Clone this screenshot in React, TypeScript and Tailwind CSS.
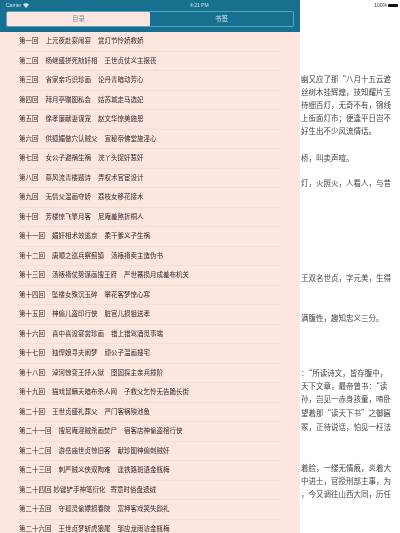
const chapters: { no: string; a: string; b: string; tight?: boolean }[] = [
  { no: "第一回", a: "上元夜赴宴闹宴", b: "赏灯节怜娇救娇" },
  { no: "第二回", a: "杨继盛拼死劾奸相", b: "王世贞仗义主报丧" },
  { no: "第三回", a: "省家亲巧识珍画", b: "论丹青暗动芳心" },
  { no: "第四回", a: "拜月亭赠图私会", b: "姑苏城走马选妃" },
  { no: "第五回", a: "徐孝廉献妻谋宠", b: "赵文华惊美施恩" },
  { no: "第六回", a: "供狐媚做穴认贼父", b: "宣秘帝佛堂施淫心" },
  { no: "第七回", a: "女公子避祸生祸", b: "浣丫头捉奸惹奸" },
  { no: "第八回", a: "慕风流青楼题诗", b: "弄权术官宦设计" },
  { no: "第九回", a: "无情父温画夺娇", b: "荔枝女移花接木" },
  { no: "第十回", a: "芳楼惊飞擎月客", b: "尼庵羞煞折桐人" },
  { no: "第十一回", a: "媚奸相术效逃京", b: "柔干爹义子生祸" },
  { no: "第十二回", a: "唐顺之巡兵察蓟镇", b: "汤裱褙卖主造伪书" },
  { no: "第十三回", a: "汤裱褙仗势谋画搜王府", b: "严世蕃损月成羞布机关" },
  { no: "第十四回", a: "坠楼女殊沉玉碎", b: "攀花客梦惊心寒" },
  { no: "第十五回", a: "神偷儿盗印行侠", b: "脏官儿损狙送孝" },
  { no: "第十六回", a: "喜中喜设宴赏珍画", b: "错上错驾酒觅事端" },
  { no: "第十七回", a: "独悍娘寻夫闹梦", b: "顽公子温画搜宅" },
  { no: "第十八回", a: "淖河惊变王抒入狱", b: "囹圄探主亲兵撞阶" },
  { no: "第十九回", a: "猫戏鼠瞒天暗布杀人网", b: "子救父乞怜无告跪长街" },
  { no: "第二十回", a: "王世贞盛礼葬父", b: "严门客祸殃池鱼" },
  { no: "第二十一回", a: "搜尼庵淫贼杀画焚尸", b: "宿客店神偷盗棺行侠" },
  { no: "第二十二回", a: "游岳庙世贞惊旧客", b: "献珍图神偷刺贼奸" },
  { no: "第二十三回", a: "刺严贼义侠双陶难", b: "逢铁路斑语金瓶梅" },
  { no: "第二十四回", a: "妙键铲手神笔衍化", b: "寄意时俗盘透绒", tight: true },
  { no: "第二十五回", a: "守孤灵偷嫖损春院", b: "富押客戏笑失颜礼" },
  { no: "第二十六回", a: "王世贞梦斩虎狼尾", b: "邹应龙雨访金瓶梅" },
];

// reader text behind the drawer
const readerLines: { text: string; mt: string }[] = [
  { text: "幽又应了那“八月十五云遮", mt: "mt-[75px]" },
  { text: "丝树木挂辉煌，技知耀片玉", mt: "mt-[6px]" },
  { text: "待细百灯，无奇不有，锦线", mt: "mt-[6px]" },
  { text: "上街面灯市；便逢平日岂不", mt: "mt-[6px]" },
  { text: "好生出不少风流情话。", mt: "mt-[6px]" },
  { text: "桥，叫卖声喧。", mt: "mt-[20px]" },
  { text: "灯，火照火，人看人，与昔", mt: "mt-[18px]" },
  { text: "王双名世贞，字元美，生得", mt: "mt-[88px]" },
  { text: "满腹性，趣知忠义三分。", mt: "mt-[33px]" },
  { text: "：“所读诗文，皆存腹中，", mt: "mt-[48px]" },
  { text: "天下文章，最帝曾书：“读", mt: "mt-[6px]" },
  { text: "孙，岂见一赤身孩童，啼卧", mt: "mt-[6px]" },
  { text: "望着那“读天下书”之御匾", mt: "mt-[7px]" },
  { text: "冢，正待说话，怕见一枉法", mt: "mt-[7px]" },
  { text: "着脸，一缕无情痕，炎着大", mt: "mt-[34px]" },
  { text: "中进士，官授刑部主事，为", mt: "mt-[6px]" },
  { text: "，今又调往山西大同，历任", mt: "mt-[6px]" },
];

export default function App() {
  return (
    <div className="flex h-[533px] w-[400px] overflow-hidden bg-white font-['Liberation_Sans','Noto_Sans_CJK_SC',sans-serif]">
      <aside className="flex h-full w-[300px] shrink-0 flex-col overflow-hidden bg-[#fde6df]">
        <header className="flex h-[32px] shrink-0 flex-col bg-[#17708f] px-[6px]">
          <div className="relative flex h-[11px] items-center justify-between text-[5px] leading-none text-[#cfe3ea] blur-[0.3px]">
            <div className="flex items-center gap-[2px]">
              <span>Carrier</span>
              <svg width="6" height="5" viewBox="0 0 6 5">
                <path d="M0 1.6 A4.2 4.2 0 0 1 6 1.6 L3 5 Z" fill="#cfe3ea" />
              </svg>
            </div>
            <span className="absolute left-[184px]">4:21 PM</span>
          </div>
          <div className="flex h-[16px] w-[288px] rounded-[2px] border border-[#55a5bc] text-[6.5px] blur-[0.3px]">
            <div className="flex flex-1 items-center justify-center rounded-[1px] bg-[#fde6df] text-[#6f8d95]">目录</div>
            <div className="flex flex-1 items-center justify-center text-[#d7e8ec]">书签</div>
          </div>
        </header>
        <ul className="flex flex-col text-[6.5px] leading-none text-[#33282a] blur-[0.3px]">
          {chapters.map((c) => (
            <li key={c.no} className="ml-[17px] mr-[20px] flex h-[19.52px] shrink-0 items-center border-b border-[#f6dcd4] pl-[2px] whitespace-nowrap">
              <span className={c.tight ? "mr-[2px]" : "mr-[7px]"}>{c.no}</span>
              <span className={c.tight ? "mr-[5px]" : "mr-[7px]"}>{c.a}</span>
              <span>{c.b}</span>
            </li>
          ))}
        </ul>
      </aside>
      <main className="relative flex flex-1 flex-col overflow-hidden pl-[1px] font-['Noto_Sans_CJK_SC',sans-serif] text-[7.5px] leading-[7px] text-[#444444] blur-[0.6px]">
        <div className="absolute top-[3px] right-[2px] flex items-center gap-[1px] font-['Liberation_Sans',sans-serif] text-[5px] leading-none text-[#333333]">
          <span>100%</span>
          <span className="h-[3px] w-[10px] rounded-[1px] bg-[#111111]" />
        </div>
        {readerLines.map((l) => (
          <p key={l.text} className={`${l.mt} whitespace-nowrap`}>{l.text}</p>
        ))}
      </main>
    </div>
  );
}
